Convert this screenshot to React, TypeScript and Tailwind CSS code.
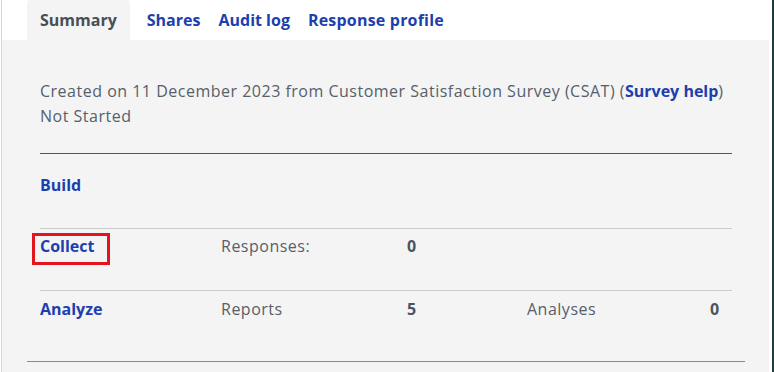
export default function App() {
  return (
    <div className="flex h-[372px] w-[774px] bg-white font-['Open_Sans',sans-serif] text-[16px] leading-[25px] text-[#56606a]">
      <div className="ml-px w-px bg-[#d6d6d6]" />
      <div className="flex w-[767px] flex-col">
        <nav className="flex h-10 items-center bg-white pl-[25px] font-bold">
          <span className="flex h-10 items-center rounded-t-[3px] bg-[#f4f4f4] px-[13px] pt-px text-[#474f57]">
            Summary
          </span>
          <a className="ml-[17px] pt-px text-[#1d3fae]">Shares</a>
          <a className="ml-[18px] pt-px text-[#1d3fae]">Audit log</a>
          <a className="ml-[18px] pt-px tracking-[0.2px] text-[#1d3fae]">Response profile</a>
        </nav>

        <div className="flex-1 bg-[#f4f4f4] pl-[25px]">
          <div className="w-[718px] border-b border-[#8a8a8a] px-[13px] pb-[39px] pt-[39px] tracking-[0.5px]">
            <p>
              Created on 11 December 2023 from Customer Satisfaction Survey (CSAT) (
              <a className="font-bold tracking-normal text-[#1d3fae]">Survey help</a>)
            </p>
            <p>Not Started</p>

            <div className="mt-6 border-t border-[#4b5a60]" />

            <div className="grid h-[74px] grid-cols-[181px_186px_120px_183px_23px] pt-[19px]">
              <a className="font-bold tracking-normal text-[#1d3fae]">Build</a>
            </div>

            <div className="grid h-[62px] grid-cols-[181px_186px_120px_183px_23px] border-t border-[#cccccc] pt-[5px]">
              <span className="relative font-bold tracking-normal text-[#1d3fae]">
                Collect
                <span className="absolute -left-[8px] -top-[1px] h-[32px] w-[78px] border-[3px] border-[#e3141e]" />
              </span>
              <span>Responses:</span>
              <span className="font-bold text-[#4a5560]">0</span>
            </div>

            <div className="grid grid-cols-[181px_186px_120px_183px_23px] border-t border-[#cccccc] pt-[6px]">
              <a className="font-bold tracking-normal text-[#1d3fae]">Analyze</a>
              <span>Reports</span>
              <span className="font-bold text-[#4a5560]">5</span>
              <span>Analyses</span>
              <span className="font-bold text-[#4a5560]">0</span>
            </div>
          </div>
        </div>
      </div>
      <div className="w-[3px] bg-white" />
      <div className="w-[2px] bg-[#1f3b3b]" />
    </div>
  );
}
